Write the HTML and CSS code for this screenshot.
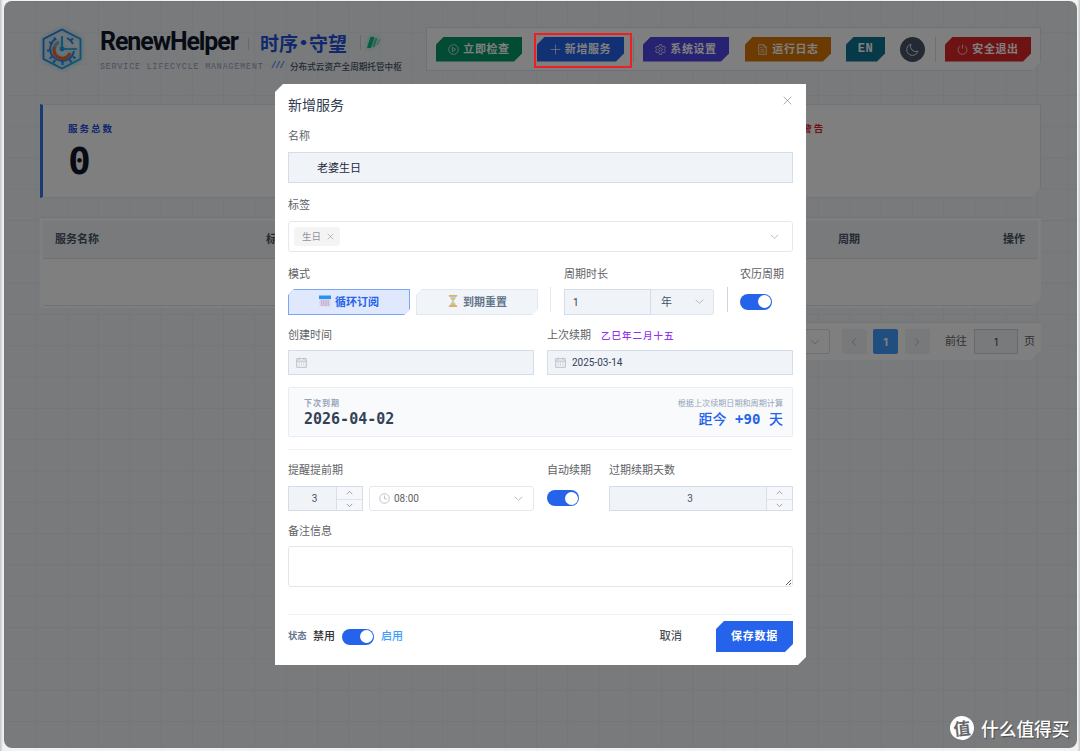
FILE: index.html
```html
<!DOCTYPE html>
<html lang="zh-CN">
<head>
    <meta charset="UTF-8">
    <meta name="viewport" content="width=device-width, initial-scale=1.0">
    <title>RenewHelper</title>
    <link rel="stylesheet" href="styles.css">
</head>
<body>
    <div class="window">
        <header class="header">
            <svg class="logo" viewBox="0 0 42 42" fill="none">
                <path d="M21 1.500 39.500 11v20L21 40.500 2.500 31V11z" stroke="url(#hex)" stroke-width="1.800"/>
                <path d="M15 10.500A12 12 0 1 0 33 23M26 10a12 12 0 0 1 6 6" stroke="#2b82e8" stroke-width="1.800"/>
                <path d="M8 14l3.500 2M6 22.500h4M8.500 30.500l3-2M14 32l-1.500 3M21.500 33v4M28.500 31.500l2 3M32 28.500l2.500 2M13 9.500l2 2.500M29.500 12.500l2.500-2" stroke="#2b82e8" stroke-width="2"/>
                <path d="M18 14a8 8 0 0 0-4.500 6" stroke="#8fa2b4" stroke-width="3"/>
                <path d="M13.500 19a8 8 0 0 0 15.500 6" stroke="#f5652b" stroke-width="3.200"/>
                <path d="M21 8v13h15" stroke="#1798e0" stroke-width="1.700"/>
                <circle cx="21" cy="21" r="2.400" fill="#18a7e0"/>
                <defs>
                    <linearGradient id="hex" x1="0" y1="0" x2="1" y2="1">
                        <stop stop-color="#2f6fe8"/>
                        <stop offset="1" stop-color="#14b8d8"/>
                    </linearGradient>
                </defs>
            </svg>
            <div class="brand">
                <div class="brand-main">
                    <h1>RenewHelper</h1>
                    <i class="bar"></i>
                    <span class="brand-cn">时序<b>·</b>守望</span>
                    <i class="bar bar-second"></i>
                    <svg class="stripes" viewBox="0 0 14 12"><path d="M3.500 0h4L4 11H0z" fill="#10b981"/><path d="M8.500 1h2L7.500 10h-2z" fill="#10b981" opacity=".7"/><path d="M12 2h1.500L11 8H9.500z" fill="#10b981" opacity=".4"/></svg>
                </div>
                <div class="brand-sub">
                    <span class="sub-en">SERVICE LIFECYCLE MANAGEMENT</span>
                    <span class="slashes">///</span>
                    <span class="sub-cn">分布式云资产全周期托管中枢</span>
                </div>
            </div>
            <nav class="toolbar">
                <button class="btn green"><svg viewBox="0 0 16 16"><circle cx="8" cy="8" r="7"/><path d="M6.300 4.800v6.400L11.300 8z"/></svg>立即检查</button>
                <button class="btn blue"><svg viewBox="0 0 16 16"><path d="M8 1v14M1 8h14"/></svg>新增服务</button>
                <i class="sep sep-first"></i>
                <button class="btn indigo"><svg viewBox="0 0 16 16"><path d="M6.500 1h3l.5 2.200 1.600.9 2.200-.7 1.500 2.600L13.600 7.500v1l1.700 1.500-1.500 2.600-2.200-.7-1.600.9L9.500 15h-3L6 12.800l-1.600-.9-2.200.7L.7 10l1.700-1.500v-1L.7 6l1.500-2.600 2.200.7L6 3.200z"/><circle cx="8" cy="8" r="2.500"/></svg>系统设置</button>
                <button class="btn orange"><svg viewBox="0 0 16 16"><path d="M2.500 1H10l3.500 3.500V15h-11zM10 1v3.500h3.500M5 5h2.500M5 8.200h6M5 11.400h6"/></svg>运行日志</button>
                <button class="btn teal">EN</button>
                <button class="moon"><svg viewBox="0 0 16 16"><path d="M6 1.500A7 7 0 1 0 14.700 10 6.500 6.500 0 0 1 6 1.500z"/></svg></button>
                <i class="sep"></i>
                <button class="btn red"><svg viewBox="0 0 16 16"><path d="M4.500 3a6.500 6.500 0 1 0 7 0M8 .8v6"/></svg>安全退出</button>
            </nav>
        </header>

        <section class="stats">
            <div class="stat stat-total">
                <span class="stat-label">服务总数</span>
                <span class="stat-value">0</span>
            </div>
            <div class="stat"></div>
            <div class="stat stat-warn">
                <span class="stat-label">过期警告</span>
            </div>
        </section>

        <section class="table">
            <div class="table-head">
                <span class="col-name">服务名称</span>
                <span class="col-tag">标签</span>
                <span class="col-cycle">周期</span>
                <span>操作</span>
            </div>
            <div class="table-body"></div>
        </section>

        <section class="pager">
            <div class="page-size"><svg viewBox="0 0 16 16"><path d="M3 5.500l5 5 5-5"/></svg></div>
            <button class="page"><svg viewBox="0 0 16 16"><path d="M10.500 3l-5 5 5 5"/></svg></button>
            <button class="page active">1</button>
            <button class="page"><svg viewBox="0 0 16 16"><path d="M5.500 3l5 5-5 5"/></svg></button>
            <span class="goto">前往</span>
            <span class="goto-input">1</span>
            <span class="goto-unit">页</span>
        </section>

        <div class="overlay"></div>
    </div>

    <div class="highlight"></div>

    <div class="dialog">
        <div class="dialog-head">
            <h2>新增服务</h2>
            <svg class="close" viewBox="0 0 16 16"><path d="M2.500 2.500l11 11M13.500 2.500l-11 11"/></svg>
        </div>

        <label class="label">名称</label>
        <div class="field name">老婆生日</div>

        <label class="label">标签</label>
        <div class="field select tags">
            <span class="tag">生日<svg viewBox="0 0 16 16"><path d="M3 3l10 10M13 3L3 13"/></svg></span>
            <svg class="arrow" viewBox="0 0 16 16"><path d="M2.500 5.500l5.500 5 5.500-5"/></svg>
        </div>

        <div class="row row-mode">
            <div class="mode">
                <label class="label">模式</label>
                <div class="mode-btns">
                    <button class="mode-btn on">
                        <span>
                            <svg viewBox="0 0 12 12"><rect x=".5" y="1" width="11" height="10.500" rx="1" fill="#dcd3ec" stroke="none"/><path d="M0 .5h12V4H0z" fill="#2196f3" stroke="none"/><path d="M2 6h8M2 8h8M2 10h8" stroke="#b08fb8" stroke-dasharray="1.300 .9"/></svg>循环订阅
                        </span>
                    </button>
                    <button class="mode-btn">
                        <span>
                            <svg viewBox="0 0 12 12"><path d="M3 1h6v2L6.800 6 9 9v2H3V9l2.200-3L3 3z" fill="#b9dcec" stroke="none"/><path d="M3.600 3h4.800L6 6zM6 7l2.500 3.500h-5z" fill="#f5b942" stroke="none"/><path d="M1.800.8h8.400M1.800 11.200h8.400" stroke="#d09a4c" stroke-width="1.200"/></svg>到期重置
                        </span>
                    </button>
                </div>
            </div>
            <i class="rule"></i>
            <div class="cycle">
                <label class="label">周期时长</label>
                <div class="cycle-inputs">
                    <div class="field num">1</div>
                    <div class="field unit">年<svg class="arrow" viewBox="0 0 16 16"><path d="M2.500 5.500l5.500 5 5.500-5"/></svg></div>
                </div>
            </div>
            <i class="rule rule-dark"></i>
            <div class="lunar">
                <label class="label">农历周期</label>
                <div class="switch-box"><i class="switch"></i></div>
            </div>
        </div>

        <div class="row dates">
            <div>
                <label class="label">创建时间</label>
                <div class="field date"><svg viewBox="0 0 16 16"><path d="M1 2.500h14v12.500H1zM1 6h14M4.500 1v3M11.500 1v3M4 8.500h1.500M7.200 8.500h1.500M10.500 8.500H12M4 11.500h1.500M7.200 11.500h1.500M10.500 11.500H12"/></svg></div>
            </div>
            <div>
                <label class="label">上次续期<span class="lunar-date">乙巳年二月十五</span></label>
                <div class="field date"><svg viewBox="0 0 16 16"><path d="M1 2.500h14v12.500H1zM1 6h14M4.500 1v3M11.500 1v3M4 8.500h1.500M7.200 8.500h1.500M10.500 8.500H12M4 11.500h1.500M7.200 11.500h1.500M10.500 11.500H12"/></svg>2025-03-14</div>
            </div>
        </div>

        <div class="next">
            <div class="next-left">
                <span class="next-label">下次到期</span>
                <span class="next-date">2026-04-02</span>
            </div>
            <div class="next-right">
                <span class="next-hint">根据上次续期日期和周期计算</span>
                <span class="next-days">距今 <b>+90</b> 天</span>
            </div>
        </div>

        <div class="row remind">
            <div class="ahead">
                <label class="label">提醒提前期</label>
                <div class="ahead-inputs">
                    <div class="field stepper">
                        <span>3</span>
                        <div class="steps"><svg viewBox="0 0 16 16"><path d="M3 10.500l5-5 5 5"/></svg><svg viewBox="0 0 16 16"><path d="M3 5.500l5 5 5-5"/></svg></div>
                    </div>
                    <div class="field select time">
                        <svg class="clock" viewBox="0 0 16 16"><circle cx="8" cy="8" r="7"/><path d="M8 3.500V8.500h4"/></svg>08:00
                        <svg class="arrow" viewBox="0 0 16 16"><path d="M2.500 5.500l5.500 5 5.500-5"/></svg>
                    </div>
                </div>
            </div>
            <div class="auto">
                <label class="label">自动续期</label>
                <div class="switch-box"><i class="switch"></i></div>
            </div>
            <div class="overdue">
                <label class="label">过期续期天数</label>
                <div class="field stepper">
                    <span>3</span>
                    <div class="steps"><svg viewBox="0 0 16 16"><path d="M3 10.500l5-5 5 5"/></svg><svg viewBox="0 0 16 16"><path d="M3 5.500l5 5 5-5"/></svg></div>
                </div>
            </div>
        </div>

        <label class="label label-note">备注信息</label>
        <div class="note"><svg viewBox="0 0 8 8"><path d="M1 7l6-6M4.500 7L7 4.500"/></svg></div>

        <div class="dialog-foot">
            <span class="state">状态</span>
            <span class="off">禁用</span>
            <i class="switch"></i>
            <span class="enabled">启用</span>
            <button class="cancel">取消</button>
            <button class="save">保存数据</button>
        </div>
    </div>

    <div class="watermark"><span class="seal">值</span>什么值得买</div>
</body>
</html>
```

FILE: styles.css
```css
* {
    box-sizing: border-box;
}
body {
    margin: 0;
    width: 1080px;
    height: 751px;
    padding: 1px 3px 3px 4px;
    background: linear-gradient(90deg, #c4c4c4 0, #f2f2f2 3px, #f2f2f2 1078px, #c9cfd2 1079px);
    font-family: "Noto Sans CJK SC", sans-serif;
    font-size: 11px;
    overflow: hidden;
    position: relative;
}
h1, h2 {
    margin: 0;
}
button {
    border: none;
    padding: 0;
    font-family: inherit;
}
svg {
    flex: none;
    fill: none;
    stroke: currentColor;
}

/* Página de fundo */
.window {
    position: relative;
    height: 747px;
    padding: 26px 36px 0 36px;
    border-radius: 8px;
    overflow: hidden;
    background-color: #f1f5f9;
    background-image:
        linear-gradient(90deg, transparent 30.3px, #e8ecf1 30.3px),
        linear-gradient(transparent 30.3px, #e8ecf1 30.3px);
    background-size: 31.3px 31.3px;
    background-position: 1px 1px;
}
.overlay {
    position: absolute;
    inset: 0;
    background: rgba(0, 0, 0, 0.5);
}
.header {
    display: flex;
    height: 45px;
}
.logo {
    width: 42px;
    height: 42px;
    margin: 1px 17px 0 1px;
    stroke: none;
    filter: drop-shadow(0 0 2px #6dc8e8);
}
.brand {
    flex: 1;
}
.brand-main {
    display: flex;
    align-items: center;
    height: 31px;
}
h1 {
    width: 138px;
    padding-bottom: 1px;
    font: bold 25px/30px Roboto, sans-serif;
    letter-spacing: -1.1px;
    color: #0f172a;
}
.bar {
    width: 1px;
    height: 12px;
    margin: 3px 11px 0 10px;
    background: #cbd5e1;
}
.brand-cn {
    display: flex;
    width: 88px;
    padding-top: 1px;
    font-size: 19px;
    font-weight: bold;
    line-height: 26px;
    color: #2351d8;
    white-space: nowrap;
}
.brand-cn b {
    display: flex;
    justify-content: center;
    width: 11px;
    font-family: Roboto, sans-serif;
    font-size: 30px;
}
.bar-second {
    height: 15px;
    margin: 0 6px 0 12px;
}
.stripes {
    width: 14px;
    height: 12px;
    stroke: none;
    filter: drop-shadow(0 0 2px #6ee7b7);
}
.brand-sub {
    display: flex;
    align-items: center;
    height: 16px;
    white-space: nowrap;
}
.sub-en {
    width: 171px;
    font: 8.2px "Liberation Mono", monospace;
    letter-spacing: 0.93px;
    color: #94a3b8;
}
.slashes {
    width: 19px;
    font: bold 9px "Liberation Mono", monospace;
    letter-spacing: -1.2px;
    color: #3b82f6;
}
.sub-cn {
    font-size: 8.600px;
    font-weight: 500;
    color: #475569;
}
.toolbar {
    display: flex;
    align-items: center;
    width: 615px;
    height: 44px;
    padding: 0 9px;
    background: #fff;
    border: 1px solid #dde3ea;
    clip-path: polygon(0 0, 100% 0, 100% calc(100% - 10px), calc(100% - 10px) 100%, 0 100%);
}
.btn {
    display: flex;
    flex: none;
    align-items: center;
    justify-content: center;
    gap: 4px;
    width: 86px;
    height: 25px;
    margin-right: 16px;
    padding-bottom: 3px;
    color: #fff;
    font-size: 11px;
    font-weight: bold;
    letter-spacing: 0.6px;
    white-space: nowrap;
    clip-path: polygon(8px 0, 100% 0, 100% calc(100% - 8px), calc(100% - 8px) 100%, 0 100%, 0 8px);
}
.btn svg {
    width: 11px;
    height: 11px;
    margin-top: 3px;
}
.green { background: #059669; margin-right: 15px; }
.blue { background: #2563eb; width: 87px; margin-right: 9px; }
.indigo { background: #4f46e5; }
.orange { background: #d97706; margin-right: 15px; }
.teal { background: #0e7490; width: 39px; padding-bottom: 0; font-family: "Liberation Mono", monospace; font-size: 12px; margin-right: 15px; }
.red { background: #dc2626; margin-right: 0; }
.moon {
    flex: none;
    width: 25px;
    height: 25px;
    padding: 6px;
    border-radius: 50%;
    background: #475569;
    color: #fff;
}
.moon svg {
    display: block;
    width: 13px;
    height: 13px;
}
.sep {
    flex: none;
    width: 1px;
    height: 25px;
    margin: 0 9px 0 10px;
    background: #dbe0e6;
}
.sep-first {
    margin: 0 9px 0 0;
}

.stats {
    display: grid;
    grid-template-columns: 1fr 1fr 1fr;
    margin-top: 32px;
    height: 94px;
}
.stat {
    display: flex;
    flex-direction: column;
    padding: 15px 25px 0;
    background: #fff;
    border-top: 1px solid #e2e8f0;
    border-bottom: 1px solid #e2e8f0;
}
.stat-total {
    border-left: 3px solid #2f79e8;
}
.stat-warn {
    padding-left: 72px;
    border-right: 1px solid #dfe4ea;
    clip-path: polygon(0 0, 100% 0, 100% calc(100% - 10px), calc(100% - 10px) 100%, 0 100%);
}
.stat-label {
    font-size: 9.500px;
    font-weight: bold;
    line-height: 16px;
    letter-spacing: 2px;
    color: #2351d8;
}
.stat-warn .stat-label {
    color: #dc2626;
}
.stat-value {
    margin-top: 3px;
    font: bold 38px/44px "DejaVu Sans Mono", monospace;
    color: #0f172a;
}
.table {
    height: 91px;
    margin-top: 19px;
    padding: 3px 3px;
    background: #fff;
    border-top: 1px solid #e2e8f0;
    clip-path: polygon(0 0, 100% 0, 100% calc(100% - 10px), calc(100% - 10px) 100%, 0 100%);
}
.table-head {
    display: flex;
    align-items: center;
    height: 38px;
    padding: 0 12px 4px;
    background: #f1f5f9;
    border-bottom: 1px solid #dce3eb;
    font-weight: bold;
    color: #475569;
}
.table-body {
    height: 47px;
    border-bottom: 1px solid #dce3eb;
}
.col-name { width: 211px; }
.col-tag { width: 572px; }
.col-cycle { width: 165px; }
.pager {
    display: flex;
    align-items: center;
    justify-content: flex-end;
    width: 390px;
    height: 38px;
    margin: 14px 0 0 auto;
    padding-right: 6px;
    background: #fff;
    border-top: 1px solid #e2e8f0;
    color: #606266;
    clip-path: polygon(0 0, 100% 0, 100% calc(100% - 10px), calc(100% - 10px) 100%, 0 100%);
}
.page-size {
    display: flex;
    align-items: center;
    justify-content: flex-end;
    width: 80px;
    height: 25px;
    margin-right: 12px;
    padding-right: 8px;
    border: 1px solid #dcdfe6;
    border-radius: 2px;
}
.pager svg {
    width: 12px;
    height: 12px;
    color: #a8abb2;
}
.page {
    display: flex;
    align-items: center;
    justify-content: center;
    width: 25px;
    height: 25px;
    margin-right: 6.500px;
    background: #f0f2f5;
    border-radius: 2px;
}
.page.active {
    background: #409eff;
    color: #fff;
    font: bold 11px Inter, sans-serif;
}
.goto {
    margin-left: 9px;
}
.goto, .goto-unit {
    padding-bottom: 3px;
}
.goto-input {
    width: 44px;
    height: 25px;
    margin: 0 6px 0 7px;
    border: 1px solid #cbd5e1;
    background: #f1f5f9;
    text-align: center;
    font: 10px/24px Inter, sans-serif;
    color: #334155;
}

.highlight {
    position: absolute;
    left: 534px;
    top: 33px;
    width: 98px;
    height: 35px;
    border: 2px solid #f21d24;
}

/* Janela de cadastro */
.dialog {
    position: absolute;
    left: 275px;
    top: 84px;
    width: 531px;
    height: 581px;
    padding: 8px 13px 0;
    background: #fff;
    color: #475569;
    clip-path: polygon(8px 0, 100% 0, 100% calc(100% - 8px), calc(100% - 8px) 100%, 0 100%, 0 8px);
}
.dialog-head {
    display: flex;
    justify-content: space-between;
    height: 33px;
}
h2 {
    font-size: 14px;
    font-weight: normal;
    line-height: 24px;
    color: #303a50;
}
.close {
    width: 11px;
    height: 11px;
    margin: 3px 0 0 0;
    color: #85888e;
}
.label {
    display: block;
    height: 27px;
    line-height: 20px;
    color: #606266;
    white-space: nowrap;
}
.label-note {
    line-height: 19px;
}
.field {
    display: flex;
    align-items: center;
    height: 25px;
    background: #f0f3f8;
    border: 1px solid #d3deea;
    font-family: Roboto, "Noto Sans CJK SC", sans-serif;
    font-size: 10px;
}
.name {
    height: 31px;
    margin-bottom: 11px;
    padding: 0 0 2px 28px;
    font-size: 11px;
    color: #1e293b;
}
.select {
    background: #fff;
    border-color: #e4e7ed;
    border-radius: 3px;
}
.tags {
    height: 31px;
    margin-bottom: 11px;
    padding-left: 5px;
}
.tag {
    display: flex;
    align-items: center;
    gap: 5px;
    height: 19px;
    padding: 0 5px 1px 8px;
    border-radius: 3px;
    background: #f4f4f5;
    color: #909399;
    font-size: 9.500px;
}
.tag svg {
    width: 9px;
    height: 9px;
}
.arrow {
    width: 11px;
    height: 11px;
    margin: 0 12px 0 auto;
    color: #a0a3aa;
}
.row {
    display: flex;
}
.mode-btns {
    display: flex;
    gap: 6px;
}
.mode .label, .cycle .label, .lunar .label {
    height: 26px;
}
.mode-btn {
    width: 122px;
    height: 26px;
    padding: 1px;
    background: #e2e8f0;
    color: #64748b;
    clip-path: polygon(6px 0, 100% 0, 100% calc(100% - 6px), calc(100% - 6px) 100%, 0 100%, 0 6px);
}
.mode-btn span {
    display: flex;
    align-items: center;
    justify-content: center;
    gap: 4px;
    height: 24px;
    padding-bottom: 2px;
    background: #f1f5f9;
    font-size: 11px;
    font-weight: bold;
}
.mode-btn svg {
    width: 12px;
    height: 12px;
}
.mode-btn.on {
    background: #7ba6f8;
    color: #2563eb;
}
.mode-btn.on span {
    background: #dfe8fd;
}
.rule {
    width: 1px;
    height: 25px;
    margin: 24px 13px 0 12px;
    background: #e5e9ef;
}
.rule-dark {
    margin: 24px 12px 0 13px;
    background: #cbd5e1;
}
.cycle-inputs {
    display: flex;
}
.cycle .field {
    height: 26px;
}
.num {
    width: 87px;
    padding-left: 8px;
    color: #334155;
}
.unit {
    width: 63px;
    padding: 0 0 2px 10px;
    border-left: none;
    border-radius: 0 3px 3px 0;
    border-color: #dfe5ee;
}
.cycle .unit {
    font-size: 11px;
}
.unit .arrow {
    margin-right: 8px;
}
.switch {
    display: flex;
    justify-content: flex-end;
    width: 32px;
    height: 16px;
    padding: 1.500px;
    border-radius: 8px;
    background: #2563eb;
}
.switch::after {
    content: "";
    width: 13px;
    height: 13px;
    border-radius: 50%;
    background: #fff;
}
.switch-box {
    display: flex;
    align-items: center;
    height: 25px;
}
.dates {
    gap: 13px;
    margin-top: 9px;
}
.dates > div {
    flex: 1;
}
.dates .label {
    height: 26px;
}
.lunar-date {
    margin-left: 10px;
    font-size: 9.500px;
    font-weight: 500;
    letter-spacing: 1px;
    color: #9333ea;
}
.date {
    padding-left: 7px;
    color: #334155;
}
.date svg {
    width: 11px;
    height: 11px;
    margin-right: 6px;
    color: #a8abb2;
}
.next {
    display: flex;
    justify-content: space-between;
    height: 50px;
    margin: 12px 0;
    padding: 9px 9px 0 15px;
    background: #f8fafc;
    border: 1px solid #e8edf3;
    border-radius: 2px;
}
.next-left, .next-right {
    display: flex;
    flex-direction: column;
}
.next-right {
    align-items: flex-end;
}
.next-label {
    font-size: 8px;
    font-weight: bold;
    line-height: 11px;
    letter-spacing: 1px;
    color: #94a3b8;
}
.next-date {
    font: bold 15px/22px "DejaVu Sans Mono", monospace;
    color: #334155;
}
.next-hint {
    font-size: 8.100px;
    line-height: 12px;
    color: #94a3b8;
}
.next-days {
    font-size: 14px;
    font-weight: 500;
    line-height: 18px;
    color: #2563eb;
    word-spacing: 5.500px;
}
.next-days b {
    font: bold 14px "DejaVu Sans Mono", monospace;
}
.remind {
    height: 72px;
    padding-top: 9px;
    border-top: 1px solid #f1f3f6;
}
.remind .label {
    height: 27px;
}
.ahead-inputs {
    display: flex;
    gap: 6px;
}
.ahead .stepper {
    width: 75px;
}
.time {
    width: 165px;
    padding-left: 9px;
    color: #606266;
}
.clock {
    width: 11px;
    height: 11px;
    margin-right: 4px;
    color: #a8abb2;
}
.time .arrow {
    margin-right: 9px;
}
.auto {
    margin: 0 13px;
    width: 49px;
}
.auto .switch-box {
    height: 24px;
}
.overdue {
    flex: 1;
}
.stepper span {
    flex: 1;
    text-align: center;
    padding-left: 4px;
}
.steps {
    display: flex;
    flex-direction: column;
    width: 26px;
    height: 23px;
    border-left: 1px solid #d8e0ea;
    background: #f5f7fa;
}
.steps svg {
    width: 9px;
    height: 11.500px;
    margin: 0 8px;
    color: #606266;
}
.steps svg + svg {
    width: 25px;
    margin: 0;
    padding: 0 8px;
    border-top: 1px solid #dfe4eb;
}
.note {
    display: flex;
    align-items: flex-end;
    justify-content: flex-end;
    height: 41px;
    margin: -2px 0 27px;
    border: 1px solid #e2e6ec;
    border-radius: 3px;
}
.note svg {
    width: 7px;
    height: 7px;
    color: #444;
}
.dialog-foot {
    display: flex;
    align-items: center;
    height: 38px;
    padding-top: 6px;
    border-top: 1px solid #f1f3f6;
}
.state, .off, .enabled {
    padding-bottom: 3px;
}
.state {
    width: 25px;
    font-size: 9.300px;
    font-weight: bold;
    color: #64748b;
}
.off {
    width: 29px;
    color: #303133;
    font-weight: 500;
}
.enabled {
    flex: 1;
    margin-left: 7px;
    color: #409eff;
    font-weight: 500;
}
.cancel {
    margin-right: 34px;
    padding-bottom: 3px;
    background: none;
    color: #505358;
    font-size: 11.300px;
    font-weight: 500;
}
.save {
    width: 77px;
    height: 31px;
    padding-bottom: 4px;
    background: #2563eb;
    color: #fff;
    font-size: 11px;
    font-weight: bold;
    letter-spacing: 0.7px;
    clip-path: polygon(8px 0, 100% 0, 100% calc(100% - 8px), calc(100% - 8px) 100%, 0 100%, 0 8px);
}

.watermark {
    position: absolute;
    left: 950px;
    top: 715px;
    display: flex;
    align-items: center;
    gap: 7px;
    height: 25px;
    color: #fff;
    font-size: 17.700px;
    font-weight: 500;
    white-space: nowrap;
    text-shadow: 1px 1px 1px rgba(0, 0, 0, 0.4);
}
.seal {
    width: 24px;
    height: 24px;
    border-radius: 50%;
    background: #fff;
    color: #66686a;
    font-size: 17px;
    font-weight: bold;
    line-height: 23px;
    text-align: center;
    text-shadow: none;
    transform: rotate(-6deg);
}
```
